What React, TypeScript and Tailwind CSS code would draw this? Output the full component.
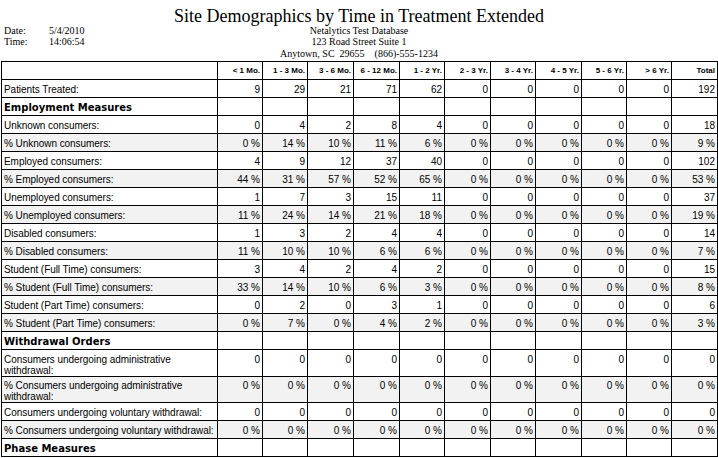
import React from "react"

const heads = ["< 1 Mo.", "1 - 3 Mo.", "3 - 6 Mo.", "6 - 12 Mo.", "1 - 2 Yr.", "2 - 3 Yr.", "3 - 4 Yr.", "4 - 5 Yr.", "5 - 6 Yr.", "> 6 Yr.", "Total"]
const colWidths = ["w-[45px]", "w-[45px]", "w-[46px]", "w-[46px]", "w-[45px]", "w-[46px]", "w-[45px]", "w-[46px]", "w-[45px]", "w-[45px]", "w-[46px]"]

type Row = {
  label: string
  kind: "data" | "pct" | "section"
  values?: number[]
  tall?: boolean
}

const zeros = [0, 0, 0, 0, 0, 0, 0, 0, 0, 0, 0]

const rows: Row[] = [
  { label: "Patients Treated:", kind: "data", values: [9, 29, 21, 71, 62, 0, 0, 0, 0, 0, 192] },
  { label: "Employment Measures", kind: "section" },
  { label: "Unknown consumers:", kind: "data", values: [0, 4, 2, 8, 4, 0, 0, 0, 0, 0, 18] },
  { label: "% Unknown consumers:", kind: "pct", values: [0, 14, 10, 11, 6, 0, 0, 0, 0, 0, 9] },
  { label: "Employed consumers:", kind: "data", values: [4, 9, 12, 37, 40, 0, 0, 0, 0, 0, 102] },
  { label: "% Employed consumers:", kind: "pct", values: [44, 31, 57, 52, 65, 0, 0, 0, 0, 0, 53] },
  { label: "Unemployed consumers:", kind: "data", values: [1, 7, 3, 15, 11, 0, 0, 0, 0, 0, 37] },
  { label: "% Unemployed consumers:", kind: "pct", values: [11, 24, 14, 21, 18, 0, 0, 0, 0, 0, 19] },
  { label: "Disabled consumers:", kind: "data", values: [1, 3, 2, 4, 4, 0, 0, 0, 0, 0, 14] },
  { label: "% Disabled consumers:", kind: "pct", values: [11, 10, 10, 6, 6, 0, 0, 0, 0, 0, 7] },
  { label: "Student (Full Time) consumers:", kind: "data", values: [3, 4, 2, 4, 2, 0, 0, 0, 0, 0, 15] },
  { label: "% Student (Full Time) consumers:", kind: "pct", values: [33, 14, 10, 6, 3, 0, 0, 0, 0, 0, 8] },
  { label: "Student (Part Time) consumers:", kind: "data", values: [0, 2, 0, 3, 1, 0, 0, 0, 0, 0, 6] },
  { label: "% Student (Part Time) consumers:", kind: "pct", values: [0, 7, 0, 4, 2, 0, 0, 0, 0, 0, 3] },
  { label: "Withdrawal Orders", kind: "section" },
  { label: "Consumers undergoing administrative withdrawal:", kind: "data", values: zeros, tall: true },
  { label: "% Consumers undergoing administrative withdrawal:", kind: "pct", values: zeros, tall: true },
  { label: "Consumers undergoing voluntary withdrawal:", kind: "data", values: zeros },
  { label: "% Consumers undergoing voluntary withdrawal:", kind: "pct", values: zeros },
  { label: "Phase Measures", kind: "section" },
]

const cell = "border border-black align-top pt-[3.5px] leading-[11px] text-[10px] text-black"

export default function App() {
  return (
    <div className="w-[718px] h-[458px] bg-white overflow-hidden font-['Liberation_Sans',Arial,sans-serif]">
      {/* report header */}
      <div className="h-[61px] font-['Liberation_Serif','Times_New_Roman',serif] text-black">
        <div className="h-[24.5px] pt-[8px] text-center text-[18px] leading-[16px]">
          Site Demographics by Time in Treatment Extended
        </div>
        <div className="grid grid-cols-[1fr_auto_1fr] text-[10px] leading-[11.6px]">
          <div className="pl-[4px]">
            <div className="flex">
              <span className="w-[45px]">Date:</span>
              <span>5/4/2010</span>
            </div>
            <div className="flex">
              <span className="w-[45px]">Time:</span>
              <span>14:06:54</span>
            </div>
          </div>
          <div className="text-center whitespace-pre">
            <div>Netalytics Test Database</div>
            <div>123 Road Street Suite 1</div>
            <div>Anytown, SC  29655    (866)-555-1234</div>
          </div>
          <div />
        </div>
      </div>

      <table className="table-fixed border-collapse w-[716px] ml-[1px]">
        <colgroup>
          <col className="w-[216px]" />
          {colWidths.map((w, i) => (
            <col key={i} className={w} />
          ))}
        </colgroup>
        <thead>
          <tr className="h-[18px]">
            <th className={cell} />
            {heads.map((h) => (
              <th key={h} className="border border-black align-top pt-[3px] pr-[2px] text-right text-[8px] leading-[11px] font-bold whitespace-nowrap">
                {h}
              </th>
            ))}
          </tr>
        </thead>
        <tbody>
          {rows.map((r) => {
            const bg = r.kind === "pct" ? "bg-[#f2f2f2]" : "bg-white"
            const h = r.tall ? "h-[26px]" : "h-[18px]"
            if (r.kind === "section") {
              return (
                <tr key={r.label} className={h}>
                  <td className={`${cell} pl-[2px] font-['DejaVu_Sans',Verdana,sans-serif] font-bold text-[9.2px] whitespace-nowrap`}>{r.label}</td>
                  {heads.map((c) => (
                    <td key={c} className={cell} />
                  ))}
                </tr>
              )
            }
            return (
              <tr key={r.label} className={`${h} ${bg}`}>
                <td className={`${cell} pl-[2px] pr-0 tracking-[-0.05px] ${r.tall ? "" : "whitespace-nowrap"}`}>{r.label}</td>
                {r.values!.map((v, i) => (
                  <td key={i} className={`${cell} pr-[2px] text-right whitespace-nowrap`}>
                    {r.kind === "pct" ? `${v} %` : v}
                  </td>
                ))}
              </tr>
            )
          })}
        </tbody>
      </table>
    </div>
  )
}
